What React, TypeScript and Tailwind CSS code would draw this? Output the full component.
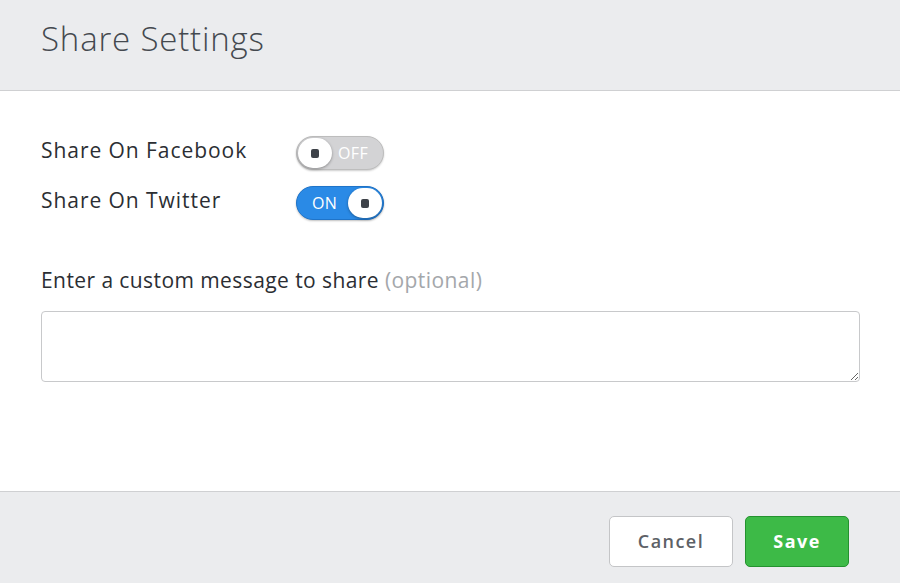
import { useState } from "react";

function Toggle({ on, onChange }: { on: boolean; onChange: () => void }) {
  return (
    <button
      onClick={onChange}
      className={
        on
          ? "relative flex h-[34px] w-[88px] shrink-0 items-center rounded-full border border-[#1f74c9] bg-[#2a8ae6] pl-[15px] shadow-[0_1px_2px_rgba(0,0,0,0.25)]"
          : "relative flex h-[34px] w-[88px] shrink-0 items-center justify-end rounded-full border border-[#bdbdbd] bg-[#d3d3d5] pr-[15px] shadow-[0_1px_2px_rgba(0,0,0,0.2)]"
      }
    >
      <span className="text-[16px] tracking-[0.02em] text-white">
        {on ? "ON" : "OFF"}
      </span>
      <span
        className={
          on
            ? "absolute right-[1px] top-[1px] flex h-[30px] w-[34px] items-center justify-center rounded-full bg-white shadow-[0_1px_3px_rgba(0,0,0,0.35)]"
            : "absolute left-[1px] top-[1px] flex h-[30px] w-[34px] items-center justify-center rounded-full bg-white shadow-[0_1px_3px_rgba(0,0,0,0.35)]"
        }
      >
        <span className="h-[9px] w-[8px] rounded-[2px] bg-[#3d4148]" />
      </span>
    </button>
  );
}

export default function App() {
  const [facebook, setFacebook] = useState(false);
  const [twitter, setTwitter] = useState(true);

  return (
    <div className="flex h-[583px] w-[900px] flex-col bg-white font-['Open_Sans',sans-serif] text-[#2b2e33]">
      <div className="flex h-[91px] items-start border-b border-[#cfd0d2] bg-[#ebecee] px-[41px] pt-[17px]">
        <h1 className="text-[33px] font-light leading-[44px] tracking-[0.025em] text-[#44494f]">
          Share Settings
        </h1>
      </div>

      <div className="flex flex-1 flex-col px-[41px] pt-[45px]">
        <div className="flex flex-col gap-[16px]">
          <div className="flex items-start">
            <span className="w-[255px] text-[21px] leading-[28px] tracking-[0.045em]">
              Share On Facebook
            </span>
            <Toggle on={facebook} onChange={() => setFacebook((v) => !v)} />
          </div>
          <div className="flex items-start">
            <span className="w-[255px] text-[21px] leading-[28px] tracking-[0.045em]">
              Share On Twitter
            </span>
            <Toggle on={twitter} onChange={() => setTwitter((v) => !v)} />
          </div>
        </div>

        <label className="mt-[46px] text-[21px] leading-[28px] tracking-[0.02em]">
          Enter a custom message to share{" "}
          <span className="text-[#a4a7ab]">(optional)</span>
        </label>
        <textarea className="mt-[17px] h-[71px] w-[819px] rounded-[4px] border border-[#c8c9cb] px-3 py-2 text-[18px] outline-none" />
      </div>

      <div className="flex h-[92px] items-start justify-end gap-[12px] border-t border-[#cfd0d2] bg-[#ebecee] pr-[51px] pt-[24px]">
        <button className="h-[51px] w-[124px] rounded-[5px] border border-[#c4c5c7] bg-white text-[18px] font-semibold tracking-[0.08em] text-[#5d6166]">
          Cancel
        </button>
        <button className="h-[51px] w-[104px] rounded-[5px] border border-[#24922f] bg-[#3dba47] text-[18px] font-bold tracking-[0.08em] text-white">
          Save
        </button>
      </div>
    </div>
  );
}
